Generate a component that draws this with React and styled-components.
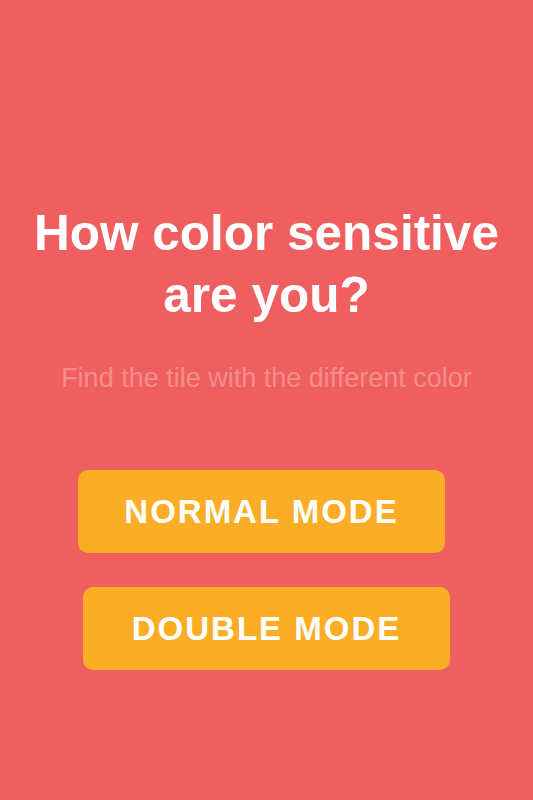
import styled, { createGlobalStyle } from "styled-components";

const Global = createGlobalStyle`
    html, body {
        margin: 0;
        padding: 0;
        background: #f05f5f;
    }
    body {
        font-family: "Liberation Sans", Arial, sans-serif;
    }
`;

function App(){
    return (
        <Screen>
            <Global />
            <Title>How color sensitive<br/>are you?</Title>
            <Subtitle>Find the tile with the different color</Subtitle>
            <Buttons>
                <ModeButton offset={-5}>NORMAL MODE</ModeButton>
                <ModeButton offset={0}>DOUBLE MODE</ModeButton>
            </Buttons>
        </Screen>
    )
}

export default App;

const Screen = styled.div`
    width: 533px;
    height: 800px;
    background: #f05f5f;
    display: flex;
    flex-direction: column;
    align-items: center;
    padding-top: 202px;
    box-sizing: border-box;
`;
const Title = styled.h1`
    margin: 0;
    color: #fff;
    font-size: 49.5px;
    line-height: 62px;
    font-weight: 700;
    text-align: center;
`;
const Subtitle = styled.p`
    margin: 36px 0 0;
    color: rgba(255, 255, 255, 0.3);
    font-size: 27px;
    line-height: 32px;
    text-align: center;
`;
const Buttons = styled.div`
    margin-top: 76px;
    display: flex;
    flex-direction: column;
    align-items: center;
    gap: 34px;
`;
const ModeButton = styled.button`
    width: 367px;
    height: 83px;
    border: none;
    border-radius: 10px;
    background: #fbad26;
    color: #fff;
    font-family: "Liberation Sans", Arial, sans-serif;
    font-size: 33px;
    font-weight: 700;
    letter-spacing: 2px;
    padding: 0;
    cursor: pointer;
    transform: translateX(${p => p.offset}px);
`;
